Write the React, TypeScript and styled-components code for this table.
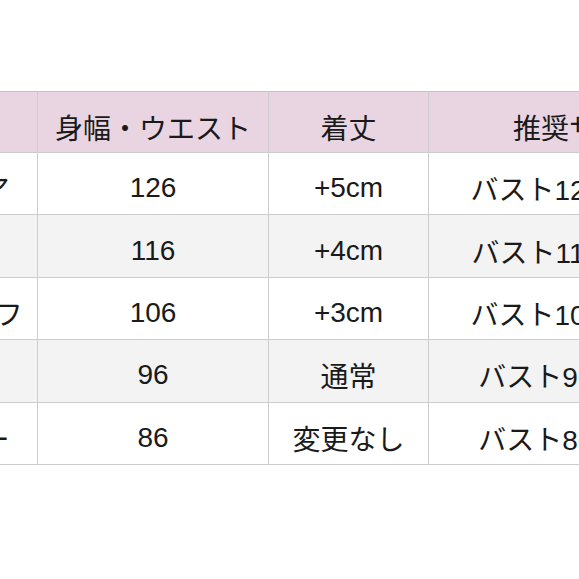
import React from "react";
import styled, { createGlobalStyle } from "styled-components";

const GlobalStyle = createGlobalStyle`
  html, body {
    margin: 0;
    padding: 0;
    background: #ffffff;
  }
  body {
    width: 579px;
    height: 579px;
    overflow: hidden;
    font-family: "Liberation Sans", "Noto Sans CJK JP", sans-serif;
  }
`;

const Page = styled.div`
  padding-top: 91px;
  width: 579px;
  overflow: hidden;
`;

const Table = styled.table<{ $w: number }>`
  border-collapse: collapse;
  margin-left: -187px;
  table-layout: fixed;
  width: ${(p) => p.$w}px;
  min-width: ${(p) => p.$w}px;
  color: #1a1a1a;
  font-size: 28px;
`;

const Col = styled.col<{ $w: number }>`
  width: ${(p) => p.$w}px;
`;

const HeadRow = styled.tr`
  height: 61px;
  background: #e9d4e1;
`;

const BodyRow = styled.tr<{ $shaded: boolean }>`
  height: 62.4px;
  background: ${(p) => (p.$shaded ? "#f3f3f3" : "#ffffff")};
`;

const Cell = styled.td`
  border: 1px solid #cdcdcd;
  text-align: center;
  vertical-align: middle;
  padding: 9px 0 0;
  white-space: nowrap;
  overflow: hidden;
  font-weight: 400;
`;

const HeadCell = styled(Cell).attrs({ as: "th" })`
  border-color: #c9bcc4 #cdcdcd #cdcdcd #cdcdcd;
`;

const columns = [224, 231, 160, 308];

const header = ["タイプ", "身幅・ウエスト", "着丈", "推奨サイズ"];

const rows = [
  ["ビッグエリア", "126", "+5cm", "バスト126cm以下"],
  ["ゆったり", "116", "+4cm", "バスト116cm以下"],
  ["ゆったりハーフ", "106", "+3cm", "バスト106cm以下"],
  ["標準", "96", "通常", "バスト96cm以下"],
  ["ふつうカバー", "86", "変更なし", "バスト86cm以下"],
];

export default function App() {
  const total = columns.reduce((a, b) => a + b, 0);
  return (
    <>
      <GlobalStyle />
      <Page>
        <Table $w={total}>
          <colgroup>
            {columns.map((w, i) => (
              <Col key={i} $w={w} />
            ))}
          </colgroup>
          <thead>
            <HeadRow>
              {header.map((h) => (
                <HeadCell key={h}>{h}</HeadCell>
              ))}
            </HeadRow>
          </thead>
          <tbody>
            {rows.map((r, i) => (
              <BodyRow key={i} $shaded={i % 2 === 1}>
                {r.map((c, j) => (
                  <Cell key={j}>{c}</Cell>
                ))}
              </BodyRow>
            ))}
          </tbody>
        </Table>
      </Page>
    </>
  );
}
